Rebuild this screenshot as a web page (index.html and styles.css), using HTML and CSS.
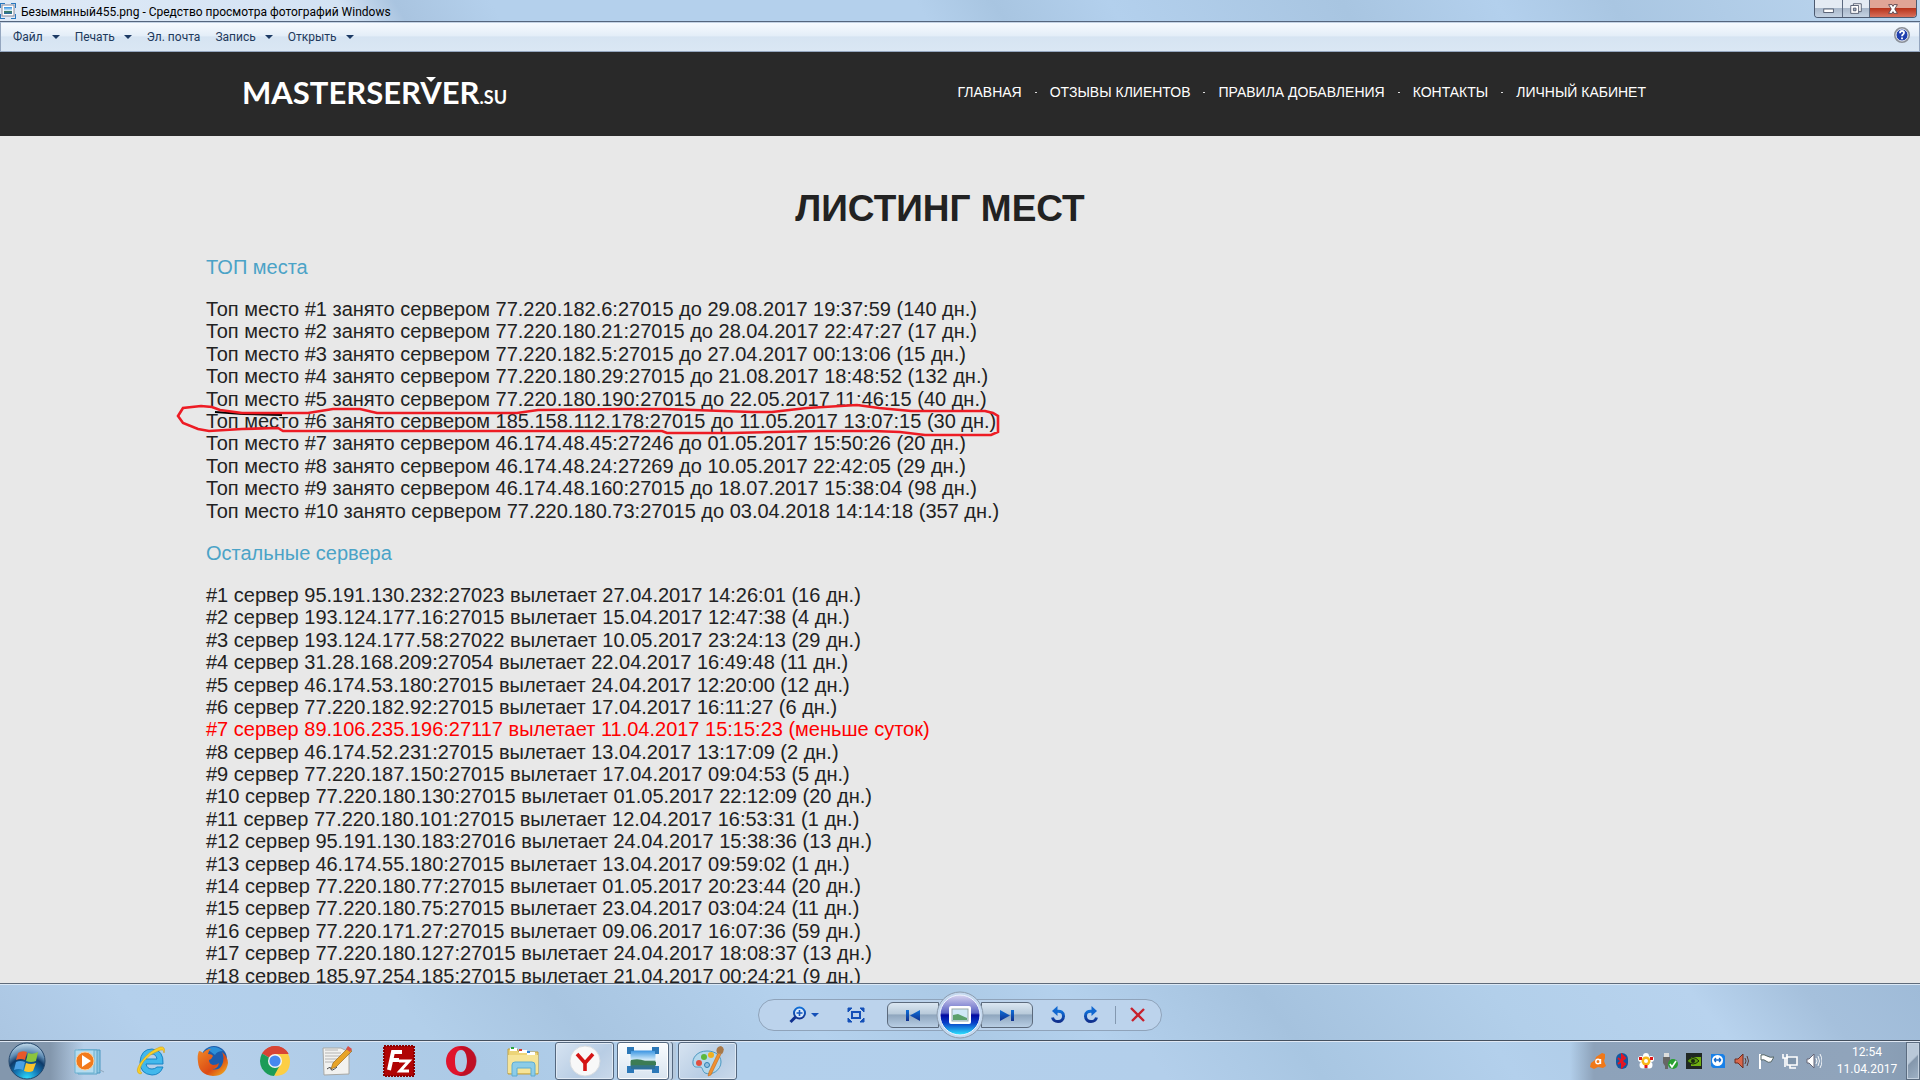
FILE: index.html
```html
<!DOCTYPE html>
<html lang="ru">
<head>
<meta charset="utf-8">
<title>Безымянный455.png - Средство просмотра фотографий Windows</title>
<link rel="stylesheet" href="styles.css">
</head>
<body>
<svg class="defs" aria-hidden="true">
  <defs>
    <linearGradient id="blue" x1="0" y1="0" x2="0" y2="1"><stop offset="0" stop-color="#0f6fd8"/><stop offset="1" stop-color="#10308e"/></linearGradient>
    <linearGradient id="sky" x1="0" y1="0" x2="0" y2="1"><stop offset="0" stop-color="#2e8ee0"/><stop offset=".5" stop-color="#d4ecfa"/><stop offset=".58" stop-color="#3f7f5a"/><stop offset="1" stop-color="#2a6ca8"/></linearGradient>
    <radialGradient id="orb" cx=".5" cy="1" r="1"><stop offset="0" stop-color="#2fe0ff"/><stop offset=".35" stop-color="#1476b4"/><stop offset=".6" stop-color="#0e3a68"/><stop offset=".75" stop-color="#5f8cb4"/><stop offset="1" stop-color="#c4dcec"/></radialGradient>
    <linearGradient id="play" x1="0" y1="0" x2="0" y2="1"><stop offset="0" stop-color="#d8d4f0"/><stop offset=".45" stop-color="#5a62c4"/><stop offset=".5" stop-color="#0208a0"/><stop offset=".7" stop-color="#0840c8"/><stop offset="1" stop-color="#30e8ff"/></linearGradient>
    <linearGradient id="fox" x1="0" y1="0" x2="1" y2="1"><stop offset="0" stop-color="#f08a28"/><stop offset=".6" stop-color="#dc4a14"/><stop offset="1" stop-color="#f4c020"/></linearGradient>
  </defs>
</svg>

<header class="titlebar">
  <svg class="app-icon" viewBox="0 0 16 16"><path d="M0 5V0h5M11 0h5v5M16 11v5h-5M5 16H0v-5" fill="none" stroke="#2b78bd" stroke-width="2"/><rect x="2" y="2" width="12" height="11" fill="#fff" stroke="#889"/><rect x="4" y="4" width="8" height="7" fill="url(#sky)"/></svg>
  <span class="window-title">Безымянный455.png - Средство просмотра фотографий Windows</span>
  <div class="window-controls">
    <button class="wc wc-min" aria-label="Свернуть"><svg viewBox="0 0 16 16"><rect x="2" y="8" width="11" height="4" fill="#fff" stroke="#4a5468"/></svg></button>
    <button class="wc wc-max" aria-label="Восстановить"><svg viewBox="0 0 16 16"><path d="M5 2h9v9h-9z" fill="#fff" stroke="#4a5468"/><path d="M2 4h9v9H2z" fill="#fff" stroke="#4a5468"/><path d="M5 7h3v3H5z" fill="#9fb0c4" stroke="#4a5468"/></svg></button>
    <button class="wc wc-close" aria-label="Закрыть"><svg viewBox="0 0 16 16"><path d="M3 3h4l1 2 1-2h4l-3 5 3 5H9l-1-2-1 2H3l3-5z" fill="#fff" stroke="#53404c"/></svg></button>
  </div>
</header>

<nav class="menubar">
  <button>Файл<i class="caret"></i></button>
  <button>Печать<i class="caret"></i></button>
  <button>Эл. почта</button>
  <button>Запись<i class="caret"></i></button>
  <button>Открыть<i class="caret"></i></button>
  <button class="help" aria-label="Справка"><svg viewBox="0 0 16 16"><circle cx="8" cy="8" r="7" fill="#1f3fae" stroke="#8a8f98" stroke-width="2"/><circle cx="8" cy="8" r="6" fill="none" stroke="#e8ecf4"/><path d="M6 6.200q0-2.200 2-2.200t2 1.800q0 1-1 1.600t-1 1.800M8 10.500v1.800" fill="none" stroke="#fff" stroke-width="1.800"/></svg></button>
</nav>

<main class="photo">
  <div class="site-header">
    <a class="logo" href="#"><span class="logo-name">MASTERSER<span class="logo-v">V</span>ER</span><span class="logo-zone">.SU</span></a>
    <div class="site-nav">
      <a href="#">ГЛАВНАЯ</a><i class="dot"></i>
      <a href="#">ОТЗЫВЫ КЛИЕНТОВ</a><i class="dot"></i>
      <a href="#">ПРАВИЛА ДОБАВЛЕНИЯ</a><i class="dot"></i>
      <a href="#">КОНТАКТЫ</a><i class="dot"></i>
      <a href="#">ЛИЧНЫЙ КАБИНЕТ</a>
    </div>
  </div>
  <article class="listing">
    <h1>ЛИСТИНГ МЕСТ</h1>
    <h2>ТОП места</h2>
    <ul class="rows rows-top">
      <li>Топ место #1 занято сервером 77.220.182.6:27015 до 29.08.2017 19:37:59 (140 дн.)</li>
      <li>Топ место #2 занято сервером 77.220.180.21:27015 до 28.04.2017 22:47:27 (17 дн.)</li>
      <li>Топ место #3 занято сервером 77.220.182.5:27015 до 27.04.2017 00:13:06 (15 дн.)</li>
      <li>Топ место #4 занято сервером 77.220.180.29:27015 до 21.08.2017 18:48:52 (132 дн.)</li>
      <li>Топ место #5 занято сервером 77.220.180.190:27015 до 22.05.2017 11:46:15 (40 дн.)</li>
      <li class="marked">Топ место #6 занято сервером 185.158.112.178:27015 до 11.05.2017 13:07:15 (30 дн.)
        <svg class="mark" viewBox="176 400 826 40"><path d="M215 412l28 2 39 1" fill="none" stroke="#000" stroke-width="2"/><path d="M178 416l5-8 18-2 11 1 8 3 22 3h66l25-4h27l17 4h140l21-3 85-1h42l87 3h20l35-4 50-3 22 3 32 3h74l8 2 5 3v16l-7 3h-66l-25-3-27-1h-55l-88 2h-63l-5-2H283l-5-3-36 1-33 2-11-2-15-6z" fill="none" stroke="#ed1c24" stroke-width="2.600"/></svg></li>
      <li>Топ место #7 занято сервером 46.174.48.45:27246 до 01.05.2017 15:50:26 (20 дн.)</li>
      <li>Топ место #8 занято сервером 46.174.48.24:27269 до 10.05.2017 22:42:05 (29 дн.)</li>
      <li>Топ место #9 занято сервером 46.174.48.160:27015 до 18.07.2017 15:38:04 (98 дн.)</li>
      <li>Топ место #10 занято сервером 77.220.180.73:27015 до 03.04.2018 14:14:18 (357 дн.)</li>
    </ul>
    <h2>Остальные сервера</h2>
    <ul class="rows rows-rest">
      <li>#1 сервер 95.191.130.232:27023 вылетает 27.04.2017 14:26:01 (16 дн.)</li>
      <li>#2 сервер 193.124.177.16:27015 вылетает 15.04.2017 12:47:38 (4 дн.)</li>
      <li>#3 сервер 193.124.177.58:27022 вылетает 10.05.2017 23:24:13 (29 дн.)</li>
      <li>#4 сервер 31.28.168.209:27054 вылетает 22.04.2017 16:49:48 (11 дн.)</li>
      <li>#5 сервер 46.174.53.180:27015 вылетает 24.04.2017 12:20:00 (12 дн.)</li>
      <li>#6 сервер 77.220.182.92:27015 вылетает 17.04.2017 16:11:27 (6 дн.)</li>
      <li class="urgent">#7 сервер 89.106.235.196:27117 вылетает 11.04.2017 15:15:23 (меньше суток)</li>
      <li>#8 сервер 46.174.52.231:27015 вылетает 13.04.2017 13:17:09 (2 дн.)</li>
      <li>#9 сервер 77.220.187.150:27015 вылетает 17.04.2017 09:04:53 (5 дн.)</li>
      <li>#10 сервер 77.220.180.130:27015 вылетает 01.05.2017 22:12:09 (20 дн.)</li>
      <li>#11 сервер 77.220.180.101:27015 вылетает 12.04.2017 16:53:31 (1 дн.)</li>
      <li>#12 сервер 95.191.130.183:27016 вылетает 24.04.2017 15:38:36 (13 дн.)</li>
      <li>#13 сервер 46.174.55.180:27015 вылетает 13.04.2017 09:59:02 (1 дн.)</li>
      <li>#14 сервер 77.220.180.77:27015 вылетает 01.05.2017 20:23:44 (20 дн.)</li>
      <li>#15 сервер 77.220.180.75:27015 вылетает 23.04.2017 03:04:24 (11 дн.)</li>
      <li>#16 сервер 77.220.171.27:27015 вылетает 09.06.2017 16:07:36 (59 дн.)</li>
      <li>#17 сервер 77.220.180.127:27015 вылетает 24.04.2017 18:08:37 (13 дн.)</li>
      <li>#18 сервер 185.97.254.185:27015 вылетает 21.04.2017 00:24:21 (9 дн.)</li>
    </ul>
  </article>
</main>

<div class="viewer-bar">
  <div class="pill">
    <button class="tool zoom" aria-label="Масштаб"><svg viewBox="0 0 18 18"><circle cx="10.500" cy="7" r="5.500" fill="#d8e8fa" stroke="url(#blue)" stroke-width="2"/><path d="M6.500 11L1.500 16" stroke="#10308e" stroke-width="3"/><path d="M10.500 4v6M7.500 7h6" stroke="#1458c0" stroke-width="1.600"/></svg><i class="caret"></i></button>
    <button class="tool fit" aria-label="По размеру окна"><svg viewBox="0 0 18 18"><path d="M1 6V2h4L1 6zM13 2h4v4zM17 12v4h-4zM5 16H1v-4z" fill="#1450b8" stroke="#1450b8"/><rect x="5" y="6" width="8" height="6" fill="none" stroke="#1450b8" stroke-width="2"/></svg></button>
    <button class="step prev" aria-label="Назад"><svg viewBox="0 0 18 18"><rect x="2" y="4" width="3" height="11" fill="url(#blue)"/><path d="M16 4v11L6 9.500z" fill="url(#blue)"/></svg></button>
    <button class="slideshow" aria-label="Показ слайдов"><svg viewBox="0 0 48 48"><circle cx="24" cy="24" r="23" fill="#c4d8ee" stroke="#8c9cae"/><circle cx="24" cy="24" r="20" fill="url(#play)" stroke="#eef4ff"/><rect x="13" y="15" width="22" height="18" rx="2" fill="#fff"/><rect x="16" y="18" width="16" height="12" fill="#cfe8f6" stroke="#9aa"/><path d="M17 24l5-1 9 4v2H17z" fill="#5ba06a"/></svg></button>
    <button class="step next" aria-label="Вперёд"><svg viewBox="0 0 18 18"><rect x="13" y="4" width="3" height="11" fill="url(#blue)"/><path d="M2 4v11l10-5.500z" fill="url(#blue)"/></svg></button>
    <button class="tool rot-left" aria-label="Повернуть влево"><svg viewBox="0 0 18 18"><path d="M7 5.500c5-1 7.500 1 7.500 4.500s-2.500 5.500-5.500 5.500-5-2-5.500-4" fill="none" stroke="url(#blue)" stroke-width="3"/><path d="M8.500 0v10L3 5z" fill="#1268d0"/></svg></button>
    <button class="tool" aria-label="Повернуть вправо"><svg viewBox="0 0 18 18"><path d="M11 5.500c-5-1-7.500 1-7.500 4.500s2.500 5.500 5.500 5.500 5-2 5.500-4" fill="none" stroke="url(#blue)" stroke-width="3"/><path d="M9.500 0v10L15 5z" fill="#1268d0"/></svg></button>
    <span class="divider"></span>
    <button class="tool" aria-label="Удалить"><svg viewBox="0 0 18 18"><path d="M2 2l13 13M15 3L3 15" stroke="#c8202c" stroke-width="2.400"/></svg></button>
  </div>
</div>

<footer class="taskbar">
  <button class="start" aria-label="Пуск"><svg viewBox="0 0 38 38"><circle cx="19" cy="19" r="18" fill="url(#orb)" stroke="#24476c"/><path d="M10 11q4-3 9-1l-2 8q-4-2-9 0z" fill="#e8582a"/><path d="M20 11q5 2 10-1l-2 9q-5 2-10 0z" fill="#8cc43c"/><path d="M8 20q4-2 9 0l-2 8q-4-2-9-0z" fill="#4aa0e4"/><path d="M18 21q5 2 10 0l-3 8q-4 2-9 0z" fill="#fbc42c"/></svg></button>
  <div class="tasks">
    <button class="task" aria-label="Проигрыватель"><svg viewBox="0 0 32 32"><path d="M8 5h19v23H8z" fill="#8cc4e0" stroke="#4a98c0"/><path d="M5 5h19v24H5z" fill="#a8d4ea" stroke="#5aa4c8"/><path d="M2 5h19v23H2z" fill="#b4dcf0" stroke="#6ab0d0"/><path d="M27 25l4 2" stroke="#8fa8bc"/><circle cx="12" cy="16" r="9" fill="#f27a1c" stroke="#fbd0a0"/><path d="M9 10l9 6-9 6z" fill="#fff"/></svg></button>
    <button class="task" aria-label="Internet Explorer"><svg viewBox="0 0 32 32"><path d="M28 19H11q1 5 6 5 3 0 5-2h6q-3 8-11 8Q5 29 5 17 6 4 17 4q12 1 11 15zM11 14h11q-1-5-5-5-5 0-6 5z" fill="#42b8ec" stroke="#1a84c4"/><path d="M5 29Q-1 27 6 17 14 6 25 2q6-1 4 6 0-5-6-2Q15 9 9 16 2 26 7 28z" fill="#f8d028" stroke="#d8a010" stroke-width=".6"/></svg></button>
    <button class="task" aria-label="Firefox"><svg viewBox="0 0 32 32"><circle cx="17" cy="14" r="13" fill="#1c5cac"/><path d="M10 4q8-5 16 2-6 0-8 4z" fill="#2c90d8"/><path d="M2 6q2 0 4 2 3-4 8-4-3 2-3 5 4 0 5 2-1 3-4 4 0 4 4 5 4 0 6-2-1 6-7 6 7 2 10-4 3-7 0-13 6 5 6 11-2 13-15 13Q2 30 1 17 0 10 2 6z" fill="url(#fox)"/></svg></button>
    <button class="task" aria-label="Chrome"><svg viewBox="0 0 32 32"><path d="M16 16L3 8.500Q8 1 16 1q9 0 13.500 7.500z" fill="#d84434"/><path d="M16 16H31q0 14-14 15l-4-2 7-13-4-7h13q2 3 2 7z" fill="#fcce44"/><path d="M16 16L3 8.500Q-1 16 3 23.500 8 31 15 31l6-11z" fill="#1c9c58"/><path d="M16 9L3 8.500Q8 1 16 1q9 0 13.500 8z" fill="#d84434"/><circle cx="16" cy="16" r="7" fill="#f4f4f4"/><circle cx="16" cy="16" r="5.600" fill="#4688f0"/></svg></button>
    <button class="task" aria-label="Блокнот"><svg viewBox="0 0 32 32"><path d="M2 3h18l8 4v22l-25 1z" fill="#f2f2f0" stroke="#a8a8a4"/><path d="M4 8h16M4 11h15M4 14h13M4 17h11M4 5h13" stroke="#b4b4b4"/><path d="M6 24q4-3 4 0t6-2" stroke="#444" fill="none"/><path d="M27 3l4 3-16 16-5 2 2-6z" fill="#e8a428" stroke="#8c5c14" stroke-width=".6"/><path d="M27 1l4 3-2 3-4-3z" fill="#d85048"/></svg></button>
    <button class="task" aria-label="FileZilla"><svg viewBox="0 0 32 32"><rect x="1" y="1" width="30" height="30" fill="#b00404" stroke="#8c0000" stroke-width="2" stroke-dasharray="2 1"/><path d="M6 25L10 7h9M9 15h7" fill="none" stroke="#fff" stroke-width="4"/><path d="M16 16h10l-9 10h9" fill="none" stroke="#fff" stroke-width="3"/></svg></button>
    <button class="task" aria-label="Opera"><svg viewBox="0 0 32 32"><path d="M16 1a15 15 0 0 0 0 30 15 15 0 0 0 0-30zM16 5c5 0 6 6 6 11s-1 11-6 11-6-6-6-11 1-11 6-11z" fill="#e0142c" fill-rule="evenodd"/><path d="M22 2a15 15 0 0 1 0 28c-3 2-8 1-10-1 6 2 10-5 10-13S18 2 13 3c3-2 6-2 9-1z" fill="#a80c20" opacity=".6"/></svg></button>
    <button class="task" aria-label="Проводник"><svg viewBox="0 0 32 32"><path d="M1 4h9l2 3h19v22H1z" fill="#ecd478" stroke="#c0a040"/><path d="M3 3h7v3H3zM12 5h8v3h-8zM20 7h8v3h-8z" fill="#fff"/><path d="M4 2h3v2H4z" fill="#2ca83c"/><path d="M12 4h3v2h-3z" fill="#d83c2c"/><path d="M20 6h3v2h-3z" fill="#2c80d8"/><path d="M1 10h30v18H1z" fill="#f6e498"/><path d="M5 31V20q0-3 3-3h17q3 0 3 3v11h-4v-8H10v8z" fill="#8ccce8" stroke="#5cacd4"/></svg></button>
    <button class="task open" aria-label="Яндекс.Браузер"><svg viewBox="0 0 32 32"><circle cx="16" cy="16" r="15" fill="#f8f8f8" stroke="#d8dce0"/><path d="M8 9l8 9 8-9M16 17v9" fill="none" stroke="#d41414" stroke-width="3.600"/></svg></button>
    <button class="task open stacked" aria-label="Просмотр фотографий"><svg viewBox="0 0 32 32"><rect x="3" y="5" width="26" height="20" fill="url(#sky)" stroke="#f4f8fc"/><path d="M4 15q8-2 14 1l11 1v3H4z" fill="#3c7c54"/><path d="M2 9V4h5M25 4h5v5M30 21v5h-5M7 26H2v-5" fill="none" stroke="#2c78b8" stroke-width="4"/></svg></button>
    <button class="task open" aria-label="Paint"><svg viewBox="0 0 32 32"><path d="M15 6C5 6 0 13 1 19c1 4 4 3 7 3s2 4 5 6c7 3 16-3 16-11 0-6-5-11-14-11z" fill="#b4d8ec" stroke="#4c98c0"/><circle cx="7" cy="18" r="3" fill="#e05040"/><circle cx="12" cy="12" r="3" fill="#5cb83c"/><circle cx="19" cy="10" r="3" fill="#f0b020"/><circle cx="15" cy="20" r="2.500" fill="#90c0e0" stroke="#3080b0"/><path d="M26 8l3 1-10 21-3 1 1-4z" fill="#f09030" stroke="#b86010" stroke-width=".5"/><path d="M25 8q-2-6 4-7 5 2 1 8z" fill="#a87848"/></svg></button>
  </div>
  <div class="tray">
    <svg viewBox="0 0 16 16"><path d="M9 2l3-2 3 1v4l-1 3 2 5-3 2-5-1-4 2-4-2 1-4 4-3 1-3z" fill="#f07818"/><circle cx="8" cy="8.500" r="2.200" fill="none" stroke="#fff" stroke-width="1.400"/><path d="M10.500 6v5" stroke="#fff" stroke-width="1.400"/></svg>
    <svg viewBox="0 0 16 16"><rect x="2" y="0" width="12" height="16" rx="6" fill="#1458a0"/><path d="M4 5l7 6-3 3V2l3 3-7 6" fill="none" stroke="#e81420" stroke-width="2"/></svg>
    <svg viewBox="0 0 16 16"><circle cx="8" cy="3" r="3" fill="#fff"/><circle cx="3" cy="6" r="3" fill="#fff"/><circle cx="13" cy="6" r="3" fill="#fff"/><circle cx="5" cy="12" r="3.500" fill="#fff"/><circle cx="11" cy="12" r="3.500" fill="#fff"/><circle cx="8" cy="8" r="4.500" fill="#f8b818"/><circle cx="8" cy="8" r="2" fill="#fff"/><path d="M1 4h3v3H1zM12 4h3v3h-3zM6.500 12h3v3h-3z" fill="#e01818"/></svg>
    <svg viewBox="0 0 16 16"><path d="M2 0h5v4H2z" fill="#ddd"/><path d="M1 4h7v6l-2 3v3H3v-3l-2-3z" fill="#666"/><circle cx="11" cy="11" r="5" fill="#28a030"/><path d="M8 11l2 3 4-6" fill="none" stroke="#fff" stroke-width="1.600"/></svg>
    <svg viewBox="0 0 16 16"><path d="M0 0h16v16H0z" fill="#202824"/><path d="M5 4h10v9H5z" fill="#70b010"/><path d="M1 8q6-7 12 0-6 6-12 0z" fill="#5c9c10" stroke="#1c2c10"/><circle cx="7" cy="8" r="2" fill="#1c2c10"/></svg>
    <svg viewBox="0 0 16 16"><path d="M1 1h12l2 2v12H3l-2-2z" fill="#1880e8"/><circle cx="7.500" cy="7.500" r="5.500" fill="#fff"/><path d="M4 7h7M4 7l2-2M4 7l2 2M11 7L9 5M11 7L9 9" stroke="#1468c8" stroke-width="1.300"/></svg>
    <svg viewBox="0 0 16 16"><path d="M1 6h3l5-5v14l-5-5H1z" fill="#d8684c" stroke="#6c2c20"/><path d="M11 5q2 3 0 6M13 3q3 5 0 10" fill="none" stroke="#5c3c38"/></svg>
    <svg viewBox="0 0 16 16"><path d="M2 1v15" stroke="#fff" stroke-width="2"/><path d="M3 2q3-1 6 1 3 2 7 1l-3 5q-3 1-5-1t-5-1z" fill="#fff" stroke="#566"/></svg>
    <svg viewBox="0 0 16 16"><path d="M5 4h10v8H5z" fill="#8095ab" stroke="#fff" stroke-width="1.600"/><path d="M8 12v3h6M1 1v4h4V1M3 5v9" fill="none" stroke="#fff" stroke-width="1.600"/></svg>
    <svg viewBox="0 0 16 16"><path d="M1 6h2l5-5v14l-5-5H1z" fill="#fff" stroke="#667"/><path d="M10 5q2 3 0 6M12 3q3 5 0 10M14 1q4 7 0 14" fill="none" stroke="#f4f6f8"/></svg>
    <time class="clock"><span>12:54</span><span>11.04.2017</span></time>
    <button class="show-desktop" aria-label="Свернуть все окна"></button>
  </div>
</footer>
</body>
</html>
```
FILE: styles.css
```css
* { box-sizing: border-box; }

body {
  margin: 0;
  height: 100vh;
  display: flex;
  flex-direction: column;
  overflow: hidden;
  background: #b5d0eb;
  font-family: Roboto, "Open Sans", sans-serif;
  font-size: 12px;
}

button {
  margin: 0;
  padding: 0;
  border: 0;
  background: none;
  font: inherit;
  color: inherit;
}

svg { display: block; flex: none; }
.defs { position: absolute; width: 0; height: 0; }

.caret {
  border: 4px solid transparent;
  border-top-color: #1c3a64;
  border-bottom: 0;
}

/* window title */
.titlebar {
  flex: none;
  height: 22px;
  display: flex;
  align-items: center;
  gap: 5px;
  border-bottom: 1px solid #55667e;
  background: linear-gradient(60deg, #dfeaf7 0, #d3e2f3 18%, #a9c4e0 21%, #b4d0ec 26%, #b4d0ec 48%, #a8c5e1 52%, #b3d0ed 58%, #a8c5e1 70%, #b3d0ed 78%, #a9c6e2 84%, #bdd7f0 100%);
}
.app-icon { width: 16px; height: 16px; }
.window-title { flex: 1; color: #000; line-height: 20px; padding-top: 2px; white-space: nowrap; }
.window-controls {
  display: flex;
  align-self: flex-start;
  height: 18px;
  margin-right: 3px;
  border: 1px solid #4c5a70;
  border-top: 0;
  border-radius: 0 0 4px 4px;
  overflow: hidden;
}
.wc {
  width: 27px;
  display: flex;
  justify-content: center;
  align-items: center;
  background: linear-gradient(#e4ebf3 0 45%, #a9b8ca 50%, #c4d2e2);
}
.wc + .wc { border-left: 1px solid #5c6a80; }
.wc svg { width: 14px; height: 14px; }
.wc-close { width: 47px; background: linear-gradient(#e0a496 0 45%, #b8341c 50%, #d8705c); }

/* menu */
.menubar {
  flex: none;
  height: 30px;
  display: flex;
  align-items: center;
  padding: 0 9px 0 12px;
  gap: 15px;
  border: 1px solid #94a6bf;
  border-top-color: #c3d2e4;
  background: linear-gradient(#f6fafe, #e4eef8 45%, #d6e4f2 50%, #dae7f4);
  color: #1e395b;
}
.menubar button { display: flex; align-items: center; gap: 9px; white-space: nowrap; }
.menubar .help { margin: 0 0 4px auto; }
.help svg { width: 16px; height: 16px; }

/* photo */
.photo {
  flex: 1;
  min-height: 0;
  overflow: hidden;
  background: #e8e8e8;
  border-bottom: 1px solid #5f6b7a;
  font-family: "Liberation Sans", Arial, sans-serif;
}
.site-header {
  height: 84px;
  padding: 0 274px 0 242px;
  display: flex;
  align-items: center;
  justify-content: space-between;
  background: #292929;
}
.site-header a { color: #fff; text-decoration: none; white-space: nowrap; }
.logo { font-family: Lato, sans-serif; padding-bottom: 4px; }
.logo-name { font-size: 31px; font-weight: 700; }
.logo-v { position: relative; }
.logo-v::after {
  content: "";
  position: absolute;
  left: 50%;
  top: 4px;
  margin-left: -5px;
  border: 5px solid transparent;
  border-top-color: #fff;
  border-bottom: 0;
}
.logo-zone { font-size: 18px; font-weight: 700; }
.site-nav { display: flex; align-items: center; gap: 13px; font-size: 14px; line-height: 18px; padding-bottom: 4px; }
.dot { width: 2px; height: 1px; background: #ddd; }

.listing {
  padding: 51px 246px 0 206px;
  color: #222;
  font-size: 20px;
  line-height: 22px;
}
h1 {
  margin: 0 0 25px;
  font-size: 37px;
  line-height: 44px;
  text-align: center;
}
h2 {
  margin: 0 0 20px;
  font-size: 20px;
  line-height: 22px;
  font-weight: 400;
  color: #4ba3c7;
}
.rows {
  margin: 0 0 20px;
  padding: 0;
  list-style: none;
  display: grid;
  white-space: nowrap;
}
.rows-top { min-height: 224px; }
.rows-rest { min-height: 403px; }
.urgent { color: #f00; }
.marked { position: relative; }
.mark { position: absolute; left: -30px; top: -10px; width: 826px; height: 40px; }

/* viewer controls */
.viewer-bar {
  flex: none;
  height: 57px;
  display: flex;
  justify-content: center;
  align-items: center;
  padding-top: 4px;
  border-top: 1px solid #dce9f6;
  border-bottom: 1px solid #44505f;
  background: linear-gradient(50deg, #abc6e2 0, #b4d0ec 8%, #b2cfea 22%, #a8c5e1 30%, #b4d1ed 42%, #accae6 50%, #b4d1ed 56%, #a5c2de 66%, #b2cfea 78%, #b8d3ee 88%, #a5c0dc 94%, #9fbbd8);
}
.pill {
  width: 404px;
  height: 32px;
  display: flex;
  align-items: center;
  padding: 0 8px 0 28px;
  border: 1px solid #8fa3ba;
  border-radius: 16px;
  background: #bcd3ec;
}
.tool { flex: none; display: flex; align-items: center; justify-content: center; width: 33px; }
.tool svg { width: 18px; height: 18px; }
.zoom { gap: 4px; }
.zoom .caret { border-top-color: #1450b8; }
.fit { margin: 0 15px 0 19px; }
.step {
  flex: none;
  width: 52px;
  height: 26px;
  display: flex;
  align-items: center;
  justify-content: center;
  border: 1px solid #5c6a7c;
  border-radius: 6px 0 0 6px;
  background: linear-gradient(#dbe7f2, #b8cada 45%, #8fa6be 50%, #b8cee4);
}
.step svg { width: 18px; height: 18px; }
.next { border-radius: 0 6px 6px 0; }
.slideshow { flex: none; margin: 0 -3px; position: relative; }
.slideshow svg { width: 48px; height: 48px; }
.rot-left { margin-left: 8px; }
.divider { flex: none; width: 1px; height: 18px; margin: 0 5px 0 8px; background: #8398b0; }

/* taskbar */
.taskbar {
  flex: none;
  height: 39px;
  display: flex;
  border-top: 1px solid #dfe8f4;
  background: linear-gradient(55deg, #b8cfe8 0, #b4cfea 12%, #accae6 25%, #b3d0ec 38%, #b3cfeb 60%, #a8c6e2 68%, #b3d0ec 78%, #a6c1dc);
}
.start { width: 84px; margin-right: -26px; padding-left: 8px; background: linear-gradient(90deg, #8397ad 60%, transparent); }
.start svg { width: 38px; height: 38px; }
.tasks { display: flex; flex: 1; }
.task {
  width: 62px;
  display: flex;
  align-items: center;
  justify-content: center;
}
.task svg { width: 32px; height: 32px; }
.open {
  width: 59px;
  margin: 0 2px 0 1px;
  border: 1px solid #54677e;
  border-radius: 3px;
  background: linear-gradient(135deg, #d6e3f1, #b8cde4 60%, #cad9ea);
  box-shadow: inset 0 0 0 1px #dfe9f4;
}
.stacked {
  width: 52px;
  margin-right: 8px;
  background: linear-gradient(#fafcfe, #d8e4f0);
  box-shadow: inset 0 0 0 1px #fff, 3px 0 0 #c8d8e8, 4px 0 0 #54677e, 7px 0 0 #b4c8dc;
}
.tray {
  display: flex;
  align-items: center;
  gap: 8px;
  padding-left: 20px;
  background: linear-gradient(90deg, transparent, #8da2ba 24px, #90a4bb 80%, #869bb2);
}
.tray svg { width: 16px; height: 16px; }
.clock {
  width: 74px;
  display: flex;
  flex-direction: column;
  align-items: center;
  color: #fff;
  line-height: 17px;
}
.show-desktop {
  width: 14px;
  height: 100%;
  margin-left: -6px;
  border: 1px solid #5b6c80;
  box-shadow: inset 0 0 0 1px #c3d0de;
  background: linear-gradient(135deg, #b9c8d8 45%, #8497ac 50%, #9fb2c6);
}
```
